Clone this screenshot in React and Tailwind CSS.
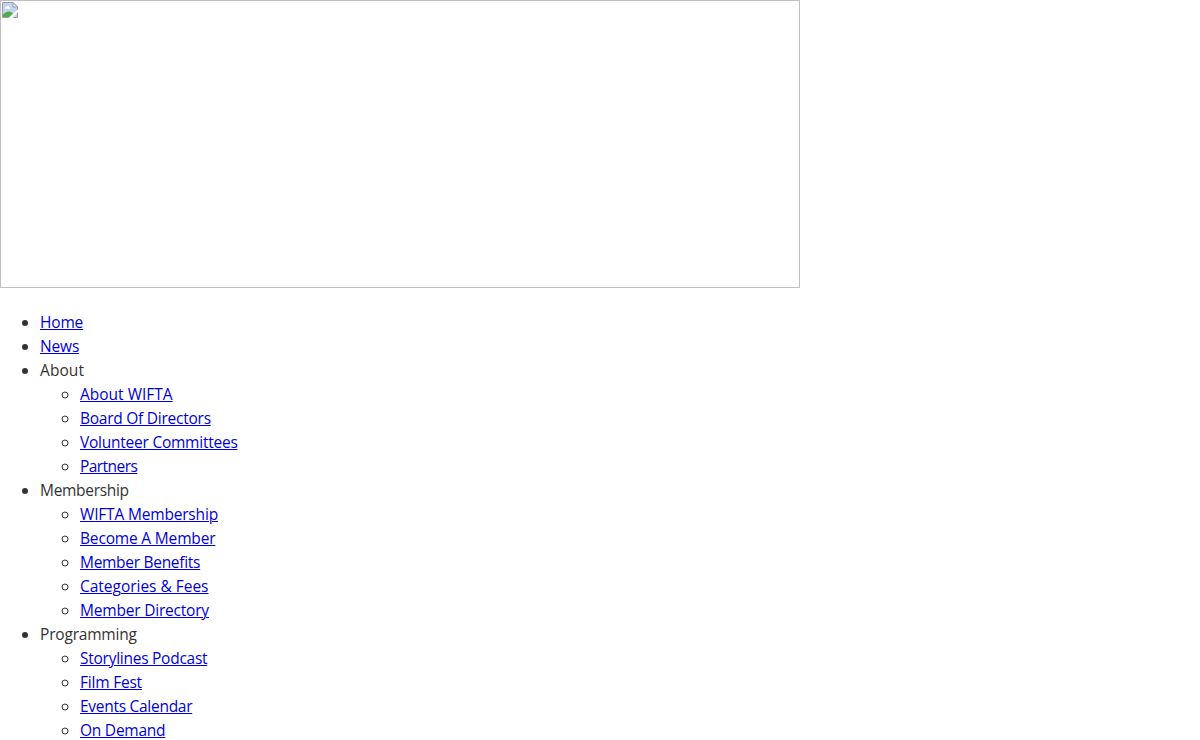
const menu = [
  { label: "Home", link: true, tracking: "tracking-[-0.17px]" },
  { label: "News", link: true, tracking: "tracking-[-0.17px]" },
  {
    label: "About",
    tracking: "tracking-[0.08px]",
    items: [
      ["About WIFTA", "tracking-[0px]"],
      ["Board Of Directors", "tracking-[-0.25px]"],
      ["Volunteer Committees", "tracking-[-0.24px]"],
      ["Partners", "tracking-[-0.55px]"],
    ],
  },
  {
    label: "Membership",
    tracking: "tracking-[-0.3px]",
    items: [
      ["WIFTA Membership", "tracking-[-0.18px]"],
      ["Become A Member", "tracking-[-0.17px]"],
      ["Member Benefits", "tracking-[-0.29px]"],
      ["Categories & Fees", "tracking-[-0.02px]"],
      ["Member Directory", "tracking-[-0.2px]"],
    ],
  },
  {
    label: "Programming",
    tracking: "tracking-[-0.19px]",
    items: [
      ["Storylines Podcast", "tracking-[-0.26px]"],
      ["Film Fest", "tracking-[-0.21px]"],
      ["Events Calendar", "tracking-[-0.28px]"],
      ["On Demand", "tracking-[-0.24px]"],
    ],
  },
];

function Label({ text, tracking, link }) {
  return link ? (
    <a href="#" className={`text-[15.5px] text-[#0000dd] underline decoration-1 ${tracking}`}>{text}</a>
  ) : (
    <span className={`text-[15.5px] ${tracking}`}>{text}</span>
  );
}

function BrokenImageIcon() {
  return (
    <svg width="16" height="16" viewBox="0 0 16 16">
      <path d="M.5.5h10.5l4.500 4.500v10.500H.5z" fill="#c0d4f4" />
      <path d="M3 6.500c0-1.200.8-1.800 1.700-1.700.7-1.200 2.500-.9 2.700.5.900.2 1 1.200.2 1.500H3.500z" fill="#fff" />
      <path d="M1 15v-2.500c2-1.800 4-3 6-3s3.500 1 5 3V15z" fill="#55aa48" />
      <path d="M.5.5h10.500l4.500 4.500v10.500H.5z" fill="none" stroke="#999da5" />
      <path d="M11 .5V5h4.500z" fill="#f5f5f5" stroke="#999da5" strokeLinejoin="round" />
      <path d="M16 7.500v2.500L10.500 16H6.500l4.500-4.500z" fill="#fff" />
    </svg>
  );
}

export default function App() {
  return (
    <div className="h-[740px] overflow-hidden bg-white font-['Open_Sans',sans-serif] text-base leading-6 text-[#333]">
      <div className="h-72 w-[800px] border border-[#c0c0c0] p-px">
        <BrokenImageIcon />
      </div>
      <ul className="mt-[22px] list-disc pl-10">
        {menu.map((m) => (
          <li key={m.label}>
            <Label text={m.label} tracking={m.tracking} link={m.link} />
            {m.items && (
              <ul className="list-[circle] pl-10">
                {m.items.map(([text, tracking]) => (
                  <li key={text}><Label text={text} tracking={tracking} link /></li>
                ))}
              </ul>
            )}
          </li>
        ))}
      </ul>
    </div>
  );
}
